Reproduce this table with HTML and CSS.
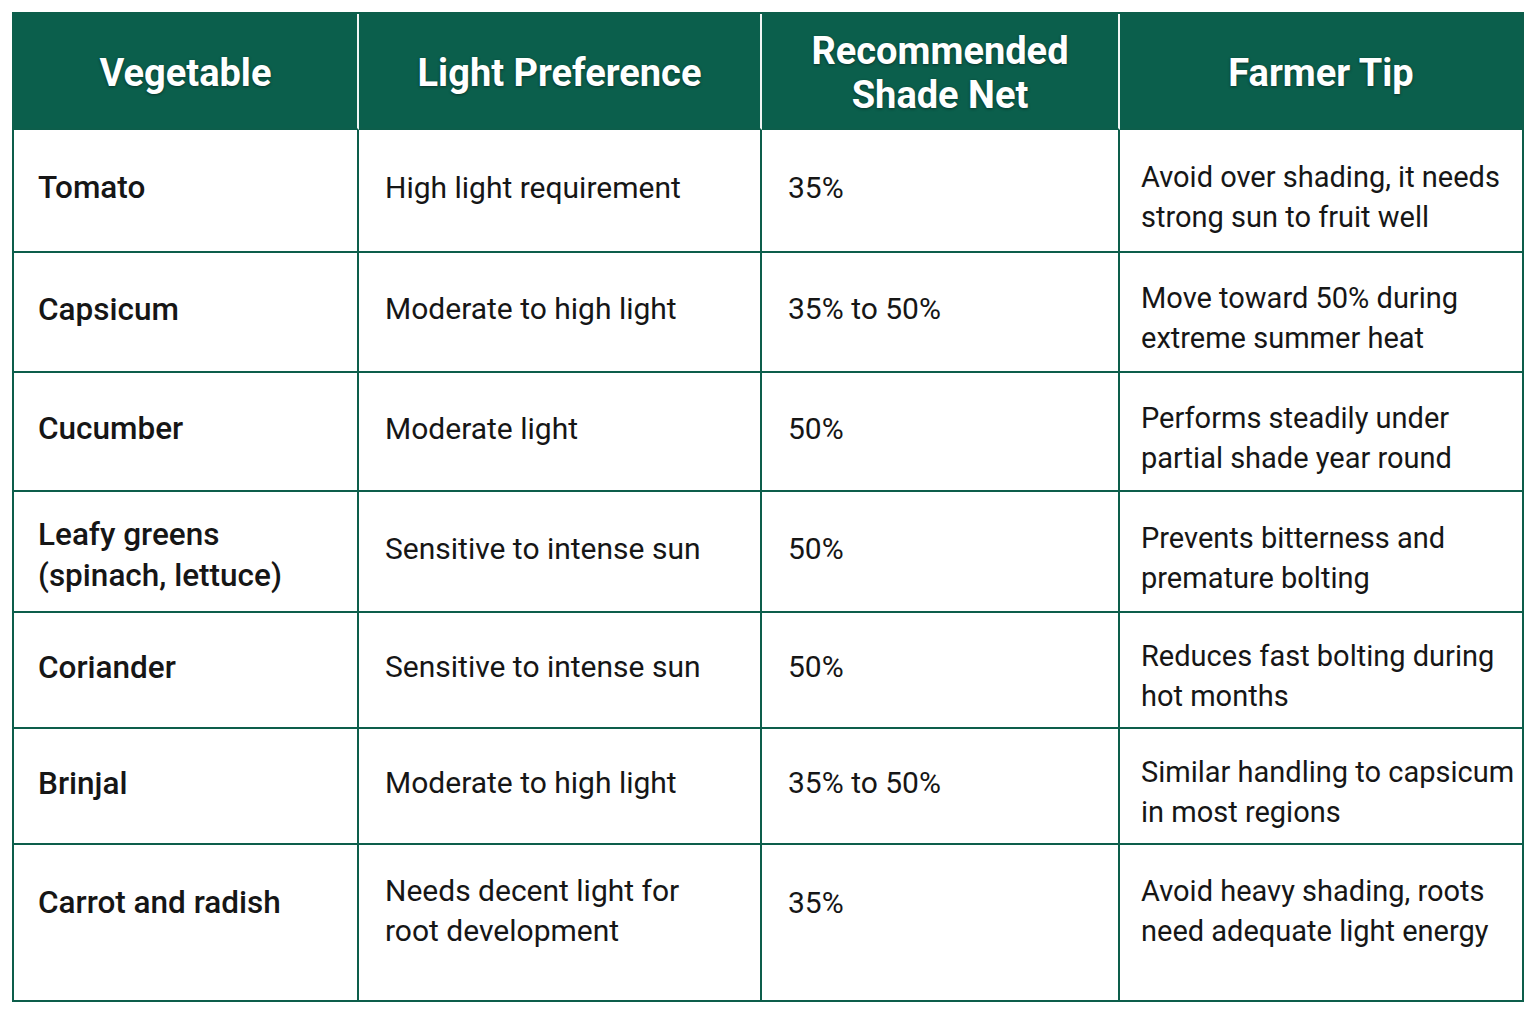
FILE: index.html
```html
<!DOCTYPE html>
<html>
<head>
<meta charset="utf-8">
<link rel="stylesheet" href="styles.css">
</head>
<body>
<table class="grid">
  <colgroup>
    <col class="c1"><col class="c2"><col class="c3"><col class="c4">
  </colgroup>
  <thead>
    <tr class="head">
      <th>Vegetable</th>
      <th>Light Preference</th>
      <th>Recommended<br>Shade Net</th>
      <th>Farmer Tip</th>
    </tr>
  </thead>
  <tbody>
    <tr class="r1">
      <td class="veg">Tomato</td>
      <td>High light requirement</td>
      <td>35%</td>
      <td class="tip">Avoid over shading, it needs<br>strong sun to fruit well</td>
    </tr>
    <tr class="r2">
      <td class="veg">Capsicum</td>
      <td>Moderate to high light</td>
      <td>35% to 50%</td>
      <td class="tip">Move toward 50% during<br>extreme summer heat</td>
    </tr>
    <tr class="r3">
      <td class="veg">Cucumber</td>
      <td>Moderate light</td>
      <td>50%</td>
      <td class="tip">Performs steadily under<br>partial shade year round</td>
    </tr>
    <tr class="r4">
      <td class="veg two">Leafy greens<br>(spinach, lettuce)</td>
      <td>Sensitive to intense sun</td>
      <td>50%</td>
      <td class="tip">Prevents bitterness and<br>premature bolting</td>
    </tr>
    <tr class="r5">
      <td class="veg">Coriander</td>
      <td>Sensitive to intense sun</td>
      <td>50%</td>
      <td class="tip">Reduces fast bolting during<br>hot months</td>
    </tr>
    <tr class="r6">
      <td class="veg">Brinjal</td>
      <td>Moderate to high light</td>
      <td>35% to 50%</td>
      <td class="tip">Similar handling to capsicum<br>in most regions</td>
    </tr>
    <tr class="r7">
      <td class="veg">Carrot and radish</td>
      <td class="two">Needs decent light for<br>root development</td>
      <td>35%</td>
      <td class="tip">Avoid heavy shading, roots<br>need adequate light energy</td>
    </tr>
  </tbody>
</table>
</body>
</html>
```
FILE: styles.css
```css
html, body {
  margin: 0;
  padding: 0;
  background: #ffffff;
}
body {
  padding: 12px 0 0 12px;
  font-family: Roboto, "Noto Sans", sans-serif;
  color: #161616;
}
.grid {
  border-collapse: separate;
  border-spacing: 0;
  table-layout: fixed;
  width: 1512px;
  border: 2px solid #0d5e4b;
}
.c1 { width: 345px; }
.c2 { width: 403px; }
.c3 { width: 358px; }
.c4 { width: 402px; }
th, td {
  box-sizing: border-box;
}
.head th {
  height: 116px;
  background: #0b5f4c;
  color: #ffffff;
  font-size: 38px;
  font-weight: 700;
  line-height: 44px;
  text-align: center;
  vertical-align: middle;
  padding: 4px 4px 0 4px;
  border-right: 2px solid #f2f5f4;
  border-bottom: 2px solid #0d5e4b;
  text-shadow: 0 1px 3px rgba(0, 0, 0, 0.45);
  white-space: nowrap;
}
.head th:last-child { border-right: none; }
td {
  font-size: 30px;
  line-height: 40px;
  vertical-align: middle;
  padding: 0 4px 6px 26px;
  border-right: 2px solid #0d5e4b;
  border-bottom: 2px solid #0d5e4b;
  white-space: nowrap;
}
td:last-child { border-right: none; }
tbody tr:last-child td { border-bottom: none; }
td.veg {
  font-size: 31.5px;
  font-weight: 500;
  line-height: 41px;
  padding-left: 24px;
}
td.veg.two { padding-top: 12px; }
td.tip {
  font-size: 29px;
  padding-left: 21px;
  padding-right: 2px;
  padding-top: 18px;
}
.r1 td { height: 123px; }
.r2 td { height: 120px; }
.r3 td { height: 119px; }
.r4 td { height: 121px; }
.r5 td { height: 116px; }
.r6 td { height: 116px; }
.r7 td { height: 155px; padding-bottom: 40px; }
.r7 td.two, .r7 td.tip { padding-top: 0; padding-bottom: 24px; }
```
